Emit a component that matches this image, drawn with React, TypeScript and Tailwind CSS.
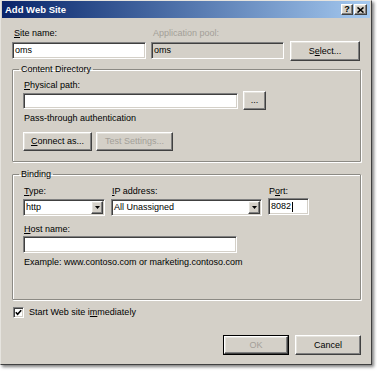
import React from "react";

const sunken =
  "border border-t-[#808080] border-l-[#808080] border-b-white border-r-white shadow-[inset_1px_1px_0_#404040,inset_-1px_-1px_0_#d4d0c8]";
const raised =
  "border border-t-white border-l-white border-b-[#404040] border-r-[#404040] shadow-[inset_-1px_-1px_0_#808080,inset_1px_1px_0_#e4e2dc]";

function U({ c }: { c: string }) {
  return <span className="underline underline-offset-[1px] decoration-[1px]">{c}</span>;
}

function Btn({
  className,
  children,
  disabled,
}: {
  className: string;
  children: React.ReactNode;
  disabled?: boolean;
}) {
  return (
    <div
      className={`${raised} ${className} bg-[#d4d0c8] flex items-center justify-center ${
        disabled ? "text-[#a39f98]" : "text-black"
      }`}
    >
      {children}
    </div>
  );
}

function Combo({ className, value }: { className: string; value: string }) {
  return (
    <div className={`${sunken} ${className} bg-white h-[17px] p-[1px] flex items-stretch`}>
      <div className="flex-1 flex items-center pl-[1px]">{value}</div>
      <div className={`${raised} w-[12px] bg-[#d4d0c8] flex items-center justify-center`}>
        <svg width="5" height="3" viewBox="0 0 5 3">
          <polygon points="0,0 5,0 2.5,3" fill="#000" />
        </svg>
      </div>
    </div>
  );
}

const groupBox =
  "border border-[#8c8a84] shadow-[inset_1px_1px_0_#ffffff,1px_1px_0_#ffffff] px-[10px] rounded-[1px]";

export default function App() {
  return (
    <div className="w-[377px] h-[371px] bg-white font-['Liberation_Sans',Arial,sans-serif] text-[9px] leading-[11px] text-black">
      <div className="w-[372px] h-[365px] bg-[#d4d0c8] border border-t-[#e6e4df] border-l-[#e6e4df] border-r-[#404040] border-b-[#404040] px-[1px] pb-[1px] shadow-[2px_2px_3px_rgba(0,0,0,0.5)] flex flex-col">
        {/* Title bar */}
        <div className="h-[17px] bg-linear-to-r from-[#0a246a] to-[#a6caf0] flex items-center pl-[3px] pr-[3px]">
          <span className="text-white font-bold text-[9.5px] leading-[11px]">Add Web Site</span>
          <div className="ml-auto flex gap-[1px]">
            <div className={`${raised} w-[12px] h-[11px] bg-[#d4d0c8] flex items-center justify-center font-bold text-[9px] leading-[9px]`}>
              ?
            </div>
            <div className={`${raised} w-[13px] h-[11px] bg-[#d4d0c8] flex items-center justify-center`}>
              <svg width="7" height="6" viewBox="0 0 7 6">
                <path d="M0.5 0.5 L6.5 5.5 M6.5 0.5 L0.5 5.5" stroke="#000" strokeWidth="1.6" />
              </svg>
            </div>
          </div>
        </div>

        {/* Content */}
        <div className="pl-[10px] pr-[9px] flex flex-col">
          {/* Row 1 */}
          <div className="flex pt-[10px]">
            <div className="w-[134px] flex flex-col">
              <span className="h-[11px] pl-[2px]">
                <U c="S" />ite name:
              </span>
              <div className={`${sunken} mt-[3px] h-[17px] bg-white flex items-center pl-[2px]`}>oms</div>
            </div>
            <div className="w-[133px] ml-[5px] flex flex-col">
              <span className="h-[11px] pl-[2px] text-[#a39f98]">Application pool:</span>
              <div className={`${sunken} mt-[3px] h-[17px] bg-[#d4d0c8] flex items-center pl-[2px]`}>oms</div>
            </div>
            <Btn className="ml-[6px] mt-[13px] w-[70px] h-[20px]">
              <span>
                S<U c="e" />lect...
              </span>
            </Btn>
          </div>

          {/* Content Directory */}
          <fieldset className={`${groupBox} mt-[3px] pb-[10px]`}>
            <legend className="ml-[-4px] px-[2px] leading-[11px]">Content Directory</legend>
            <span className="block mt-[5px] h-[11px] pl-[1px]">
              <U c="P" />hysical path:
            </span>
            <div className="flex items-center h-[19px]">
              <div className={`${sunken} w-[215px] h-[16px] bg-white`} />
              <Btn className="ml-[5px] w-[23px] h-[19px]">...</Btn>
            </div>
            <span className="block mt-[3px] h-[11px] pl-[1px]">Pass-through authentication</span>
            <div className="flex mt-[8px]">
              <Btn className="w-[69px] h-[19px]">
                <span>
                  <U c="C" />onnect as...
                </span>
              </Btn>
              <Btn className="ml-[4px] w-[77px] h-[19px]" disabled>
                Test Settings...
              </Btn>
            </div>
          </fieldset>

          {/* Binding */}
          <fieldset className={`${groupBox} mt-[7px] pb-[31px]`}>
            <legend className="ml-[-4px] px-[2px] leading-[11px]">Binding</legend>
            <div className="flex mt-[6px]">
              <div className="w-[82px] flex flex-col">
                <span className="h-[11px] pl-[1px]">
                  <U c="T" />ype:
                </span>
                <Combo className="mt-[2px] w-[82px]" value="http" />
              </div>
              <div className="w-[151px] ml-[6px] flex flex-col">
                <span className="h-[11px] pl-[1px]">
                  <U c="I" />P address:
                </span>
                <Combo className="mt-[2px] w-[151px]" value="All Unassigned" />
              </div>
              <div className="w-[41px] ml-[6px] flex flex-col">
                <span className="h-[11px] pl-[1px]">
                  P<U c="o" />rt:
                </span>
                <div className={`${sunken} mt-[1px] h-[17px] bg-white flex items-center pl-[2px]`}>
                  8082
                  <span className="inline-block w-[1px] h-[10px] bg-black ml-[1px]" />
                </div>
              </div>
            </div>
            <span className="block mt-[8px] h-[11px] pl-[1px]">
              <U c="H" />ost name:
            </span>
            <div className={`${sunken} mt-[1px] w-[214px] h-[17px] bg-white`} />
            <span className="block mt-[4px] h-[11px] pl-[1px]">
              Example: www.contoso.com or marketing.contoso.com
            </span>
          </fieldset>

          {/* Checkbox */}
          <div className="flex items-center mt-[7px] h-[11px]">
            <div className={`${sunken} ml-[1px] w-[11px] h-[11px] bg-white flex items-center justify-center`}>
              <svg width="7" height="7" viewBox="0 0 7 7">
                <polyline points="0.8,3.2 2.6,5.2 6.2,1.2" fill="none" stroke="#000" strokeWidth="1.6" />
              </svg>
            </div>
            <span className="ml-[5px]">
              Start Web site i<U c="m" />mediately
            </span>
          </div>

          {/* Buttons */}
          <div className="flex justify-end mt-[17px]">
            <div className="w-[66px] h-[20px] border border-black flex">
              <Btn className="flex-1" disabled>
                OK
              </Btn>
            </div>
            <Btn className="ml-[6px] w-[66px] h-[20px]">Cancel</Btn>
          </div>
        </div>
      </div>
    </div>
  );
}
